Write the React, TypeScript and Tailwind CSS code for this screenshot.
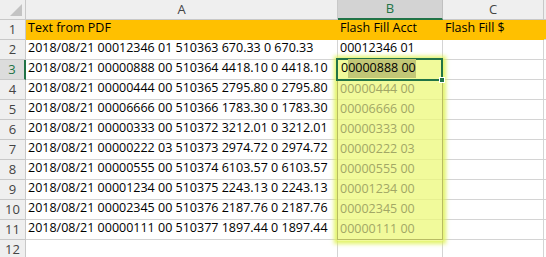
import React from "react";

const rows: string[][] = [
  ["Text from PDF", "Flash Fill Acct", "Flash Fill $"],
  ["2018/08/21 00012346 01 510363 670.33 0 670.33", "00012346 01", ""],
  ["2018/08/21 00000888 00 510364 4418.10 0 4418.10", "", ""],
  ["2018/08/21 00000444 00 510365 2795.80 0 2795.80", "00000444 00", ""],
  ["2018/08/21 00006666 00 510366 1783.30 0 1783.30", "00006666 00", ""],
  ["2018/08/21 00000333 00 510372 3212.01 0 3212.01", "00000333 00", ""],
  ["2018/08/21 00000222 03 510373 2974.72 0 2974.72", "00000222 03", ""],
  ["2018/08/21 00000555 00 510374 6103.57 0 6103.57", "00000555 00", ""],
  ["2018/08/21 00001234 00 510375 2243.13 0 2243.13", "00001234 00", ""],
  ["2018/08/21 00002345 00 510376 2187.76 0 2187.76", "00002345 00", ""],
  ["2018/08/21 00000111 00 510377 1897.44 0 1897.44", "00000111 00", ""],
  ["", "", ""],
];

const font = { fontFamily: '"Open Sans", "Liberation Sans", sans-serif' };

export default function App() {
  return (
    <div className="relative w-[546px] h-[257px] overflow-hidden bg-white text-[12.5px] text-black" style={font}>
      <div className="grid grid-cols-[26px_312px_105px_101px_1fr] auto-rows-[20px]">
        {/* header row */}
        <div className="relative bg-[#efefef] border-r border-b border-[#c8c8c8]">
          <svg className="absolute right-[3px] bottom-[3px]" width="12" height="12" viewBox="0 0 12 12">
            <polygon points="12,0 12,12 0,12" fill="#c3c3c3" />
          </svg>
        </div>
        <div className="bg-[#efefef] border-r border-b border-[#c8c8c8] flex items-center justify-center text-[#444] text-[13px]">A</div>
        <div className="bg-[#d3d3d3] border-r border-[#c0c0c0] border-b-2 border-b-[#217346] flex items-center justify-center text-[#217346] text-[13px]">B</div>
        <div className="bg-[#efefef] border-r border-b border-[#c8c8c8] flex items-center justify-center text-[#444] text-[13px]">C</div>
        <div className="bg-[#efefef] border-b border-[#c8c8c8]"></div>

        {rows.map((r, i) => {
          const n = i + 1;
          const sel = n === 3;
          const orange = n === 1;
          const filled = n >= 4 && n <= 11;
          return (
            <React.Fragment key={n}>
              <div
                className={
                  sel
                    ? "bg-[#dcdcdc] border-r-2 border-r-[#217346] border-b border-b-[#c8c8c8] flex items-center justify-center text-[#217346] text-[13px]"
                    : "bg-[#efefef] border-r border-b border-[#c8c8c8] flex items-center justify-center text-[#444] text-[13px]"
                }
              >
                {n}
              </div>
              <div className={(orange ? "bg-[#ffc000] border-[#ffc000] " : "border-[#d4d4d4] ") + "border-r border-b pl-[2px] flex items-end pb-[1px] whitespace-nowrap overflow-hidden"}>
                {r[0]}
              </div>
              <div className={(orange ? "bg-[#ffc000] border-[#ffc000] " : "border-[#d4d4d4] ") + "border-r border-b pl-[2px] flex items-end pb-[1px] whitespace-nowrap"}>
                {filled ? "" : r[1]}
              </div>
              <div className={(orange ? "bg-[#ffc000] border-[#ffc000] " : "border-[#d4d4d4] ") + "border-r border-b pl-[2px] flex items-end pb-[1px] whitespace-nowrap"}>
                {r[2]}
              </div>
              <div className={(orange ? "bg-[#ffc000] " : "") + "border-b border-[#d4d4d4]"}></div>
            </React.Fragment>
          );
        })}
      </div>

      {/* flash fill glow */}
      <div className="absolute left-[337px] top-[59px] w-[106px] h-[182px] bg-[#ecf879]/75 shadow-[0_0_4px_3px_rgba(222,242,80,0.85)] pointer-events-none" />
      {/* inner suggestion border */}
      <div className="absolute left-[337px] top-[80px] w-[106px] h-[160px] border border-[#b8bc63] pointer-events-none" />
      {/* suggested values */}
      <div className="absolute left-[338px] top-[80px] w-[104px] flex flex-col pointer-events-none">
        {rows.slice(3, 11).map((r, i) => (
          <div key={i} className="h-[20px] pl-[2px] flex items-end pb-[1px] text-[#a2a766] whitespace-nowrap">
            {r[1]}
          </div>
        ))}
      </div>
      {/* selected cell */}
      <div className="absolute left-[336px] top-[58px] w-[107px] h-[23px] border-2 border-[#217346] pointer-events-none flex items-end pl-[3px] pb-[1px] whitespace-nowrap text-black">
        <span>0</span>
        <span className="bg-[#c2c776]">0000888 00</span>
      </div>
      {/* fill handle */}
      <div className="absolute left-[439px] top-[77px] w-[6px] h-[6px] bg-[#217346] border border-white" />
    </div>
  );
}
